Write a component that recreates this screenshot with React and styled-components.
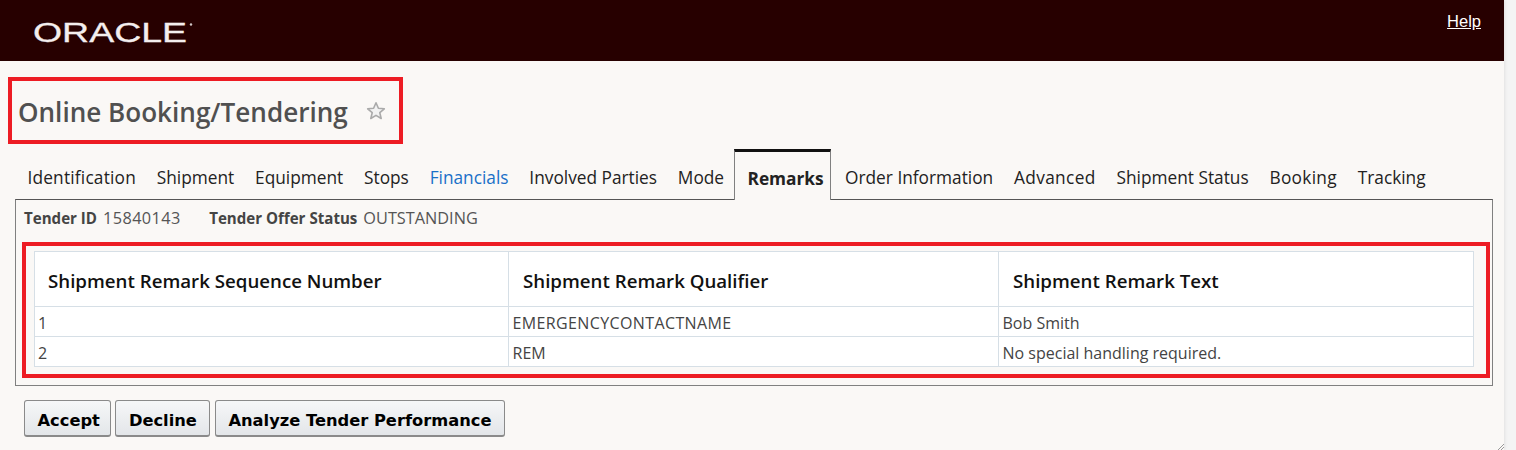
import React from "react";
import styled, { createGlobalStyle } from "styled-components";

const Global = createGlobalStyle`
  html, body { margin: 0; padding: 0; background: #f4f4f4; }
  body { font-family: "Open Sans", "Noto Sans", sans-serif; height: 450px; overflow: hidden; }
`;

const Page = styled.div`
  width: 1504px;
  height: 450px;
  background: #faf8f6;
  box-shadow: 1px 0 3px rgba(0,0,0,0.08);
  position: relative;
`;

const Header = styled.header`
  height: 61px;
  background: #270000;
  display: flex;
  justify-content: space-between;
  align-items: flex-start;
  padding: 0 23px 0 32px;
`;

const Logo = styled.svg`
  width: 164px;
  height: 30px;
  margin-top: 16px;
  display: block;
`;

const HelpLink = styled.a`
  font: 16.5px "Liberation Sans", Arial, sans-serif;
  color: #fff;
  text-decoration: underline;
  margin-top: 12px;
  line-height: 18px;
`;

const TitleBox = styled.div`
  margin: 16px 0 0 8px;
  width: 395px;
  height: 67px;
  box-sizing: border-box;
  border: 4px solid #ed1c24;
  display: flex;
  align-items: center;
  padding: 2px 0 0 6px;
  gap: 18px;
`;

const Title = styled.h1`
  margin: 0;
  font: 600 26.1px "Open Sans", sans-serif;
  color: #505050;
  white-space: nowrap;
`;

const Star = styled.svg`
  width: 20px;
  height: 20px;
  margin-top: -2px;
  flex: none;
`;

const TabBar = styled.nav`
  display: flex;
  align-items: flex-end;
  height: 50px;
  margin: 5px 0 0 0;
  padding-left: 17px;
`;

const Tab = styled.a`
  box-sizing: border-box;
  height: 50px;
  padding: 18px 10.4px 0;
  font: 400 17.3px/22px "Open Sans", sans-serif;
  letter-spacing: ${p => p.$spacing || 0}px;
  color: ${p => (p.$link ? "#1a70c8" : "#222")};
  white-space: nowrap;
  flex: none;
`;

const ActiveTab = styled.a`
  box-sizing: border-box;
  height: 51px;
  margin: 0 4px -1px 0;
  padding: 15px 6px 0 12px;
  font: 700 17.3px/24px "Open Sans", sans-serif;
  color: #222;
  border-top: 3px solid #111;
  border-left: 1px solid #808080;
  border-right: 1px solid #808080;
  background: #faf8f6;
  white-space: nowrap;
  flex: none;
  position: relative;
  z-index: 1;
`;

const Panel = styled.section`
  margin-left: 15px;
  width: 1478px;
  height: 187px;
  box-sizing: border-box;
  border: 1px solid #808080;
  border-top-color: #555;
  padding: 6px 2px 0 6px;
`;

const InfoRow = styled.div`
  display: flex;
  gap: 28.5px;
  height: 36px;
  padding-left: 2px;
  line-height: 24px;
`;

const InfoItem = styled.span`
  white-space: nowrap;
`;

const InfoLabel = styled.b`
  font: 700 15.1px "Open Sans", sans-serif;
  color: #444;
  margin-right: 6px;
`;

const InfoValue = styled.span`
  font: 400 16.3px "Open Sans", sans-serif;
  letter-spacing: ${p => p.$spacing || 0}px;
  color: #555;
`;

const TableBox = styled.div`
  width: 1468px;
  height: 136px;
  box-sizing: border-box;
  border: 4px solid #ed1c24;
  padding: 5px 0 0 8px;
`;

const Table = styled.table`
  border-collapse: collapse;
  table-layout: fixed;
  width: 1439px;
  background: #fff;
`;

const HeadCell = styled.th`
  height: 55px;
  box-sizing: border-box;
  padding: 3px 0 0 14px;
  border: 1px solid #d6dfe6;
  text-align: left;
  font: 600 18.7px "Open Sans", sans-serif;
  color: #111;
  white-space: nowrap;
  &:first-child { padding-left: 13px; }
`;

const Cell = styled.td`
  height: 30px;
  box-sizing: border-box;
  padding: 2px 0 0 3.5px;
  border: 1px solid #d6dfe6;
  font: 400 16px "Open Sans", sans-serif;
  letter-spacing: ${p => (p.$caps ? "0.38px" : "0")};
  color: #444;
  white-space: nowrap;
  &:first-child { padding-left: 3px; }
`;

const Actions = styled.div`
  display: flex;
  gap: 4.5px;
  margin: 14px 0 0 24px;
`;

const Button = styled.button`
  height: 37px;
  box-sizing: border-box;
  padding: 5px ${p => p.$right || 12.5}px 0 12.5px;
  border: 1px solid #8a8a8a;
  border-bottom-width: 2px;
  border-radius: 3px;
  background: linear-gradient(#f6f7f8, #e3e6e9);
  font: 700 16.3px "DejaVu Sans", Tahoma, sans-serif;
  color: #000;
  white-space: nowrap;
`;

const Grip = styled.svg`
  position: absolute;
  right: 0;
  bottom: 0;
  width: 6px;
  height: 6px;
`;

const tabs = [
  { label: "Identification", spacing: 0.2 },
  { label: "Shipment" },
  { label: "Equipment" },
  { label: "Stops" },
  { label: "Financials", link: true },
  { label: "Involved Parties" },
  { label: "Mode" },
];
const tabsAfter = [
  { label: "Order Information" },
  { label: "Advanced", spacing: 0.35 },
  { label: "Shipment Status" },
  { label: "Booking", spacing: 0.3 },
  { label: "Tracking" },
];
const rows = [["1", "EMERGENCYCONTACTNAME", "Bob Smith"], ["2", "REM", "No special handling required."]];
const heads = ["Shipment Remark Sequence Number", "Shipment Remark Qualifier", "Shipment Remark Text"];

const renderTab = t => <Tab key={t.label} $link={t.link} $spacing={t.spacing}>{t.label}</Tab>;

export default function App() {
  return (
    <>
      <Global />
      <Page>
        <Header>
          <Logo viewBox="0 0 164 30" aria-label="Oracle">
            <text x="1" y="25.5" fontFamily="Liberation Sans" fontSize="27" fill="#f4eeee" stroke="#f4eeee" strokeWidth="0.3" textLength="154" lengthAdjust="spacingAndGlyphs">ORACLE</text>
            <circle cx="159" cy="8.5" r="1.2" fill="#cfc6c6" />
          </Logo>
          <HelpLink href="#">Help</HelpLink>
        </Header>
        <TitleBox>
          <Title>Online Booking/Tendering</Title>
          <Star viewBox="0 0 20 20">
            <path d="M10 1.8l2.4 5.5 5.9.5-4.5 3.9 1.4 5.8L10 14.4l-5.2 3.1 1.4-5.8L1.7 7.8l5.9-.5z" fill="#f2f2f2" stroke="#aaa" strokeWidth="1.6" strokeLinejoin="round" />
          </Star>
        </TitleBox>
        <TabBar>
          {tabs.map(renderTab)}
          <ActiveTab>Remarks</ActiveTab>
          {tabsAfter.map(renderTab)}
        </TabBar>
        <Panel>
          <InfoRow>
            <InfoItem><InfoLabel>Tender ID</InfoLabel><InfoValue $spacing={0.4}>15840143</InfoValue></InfoItem>
            <InfoItem><InfoLabel>Tender Offer Status</InfoLabel><InfoValue>OUTSTANDING</InfoValue></InfoItem>
          </InfoRow>
          <TableBox>
            <Table>
              <colgroup><col style={{ width: 474 }} /><col style={{ width: 490 }} /><col style={{ width: 475 }} /></colgroup>
              <thead><tr>{heads.map(h => <HeadCell key={h}>{h}</HeadCell>)}</tr></thead>
              <tbody>
                {rows.map(r => <tr key={r[0]}>{r.map(c => <Cell key={c} $caps={c === "EMERGENCYCONTACTNAME"}>{c}</Cell>)}</tr>)}
              </tbody>
            </Table>
          </TableBox>
        </Panel>
        <Actions>
          <Button $right={10}>Accept</Button>
          <Button>Decline</Button>
          <Button>Analyze Tender Performance</Button>
        </Actions>
        <Grip viewBox="0 0 6 6"><path d="M0 6L6 0M3 6l3-3" stroke="#999" strokeWidth="1" /></Grip>
      </Page>
    </>
  );
}
